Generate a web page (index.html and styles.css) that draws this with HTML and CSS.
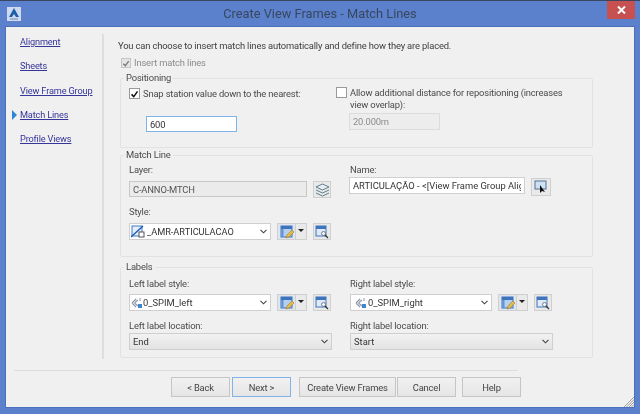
FILE: index.html
```html
<!DOCTYPE html>
<html>
  <head>
    <meta charset="utf-8">
    <title>Create View Frames - Match Lines</title>
    <link rel="stylesheet" href="styles.css">
  </head>
  <body>
    <svg class="defs" width="0" height="0">
      <symbol id="edit" viewBox="0 0 14 14">
        <rect x="1" y="1" width="11" height="11" fill="#b5cfee" stroke="#3d74bd"/>
        <rect x="1" y="1" width="11" height="3" fill="#3d74bd"/>
        <rect x="1.500" y="4" width="2" height="8" fill="#5f93d3"/>
        <path d="M6 13l1-3 5-5 2 2-5 5z" fill="#e6bb48" stroke="#9a7a2a" stroke-width=".6"/>
      </symbol>
      <symbol id="pick" viewBox="0 0 14 14">
        <rect x="1" y="1" width="10" height="10" fill="#dfe9f7" stroke="#3d74bd"/>
        <rect x="1" y="1" width="10" height="3" fill="#3d74bd"/>
        <circle cx="8.500" cy="8.500" r="2" fill="#f4f8fd" stroke="#5a6a7a" stroke-width=".8"/>
        <path d="M10 10l3 3" stroke="#333" stroke-width="1.200"/>
      </symbol>
      <symbol id="chev" viewBox="0 0 7 5">
        <path d="M.5 .8l3 3 3-3" fill="none" stroke="#444" stroke-width="1.100"/>
      </symbol>
      <symbol id="tick" viewBox="0 0 12 12">
        <path d="M2 6.500l3 3L10 2.500" fill="none" stroke="currentColor" stroke-width="2"/>
      </symbol>
      <symbol id="label-icon" viewBox="0 0 12 12">
        <path d="M1 6l4-4M1 6l4 4M3.500 6l3.500-3M3.500 6l3.500 3" fill="none" stroke="#8b97a6" stroke-width="1.100"/>
        <rect x="7" y="7" width="4" height="4" fill="#3f86cf"/>
        <path d="M9 1v3" stroke="#8b97a6"/>
      </symbol>
    </svg>

    <div class="window">
      <div class="titlebar">
        <svg class="app-icon" width="14" height="14" viewBox="0 0 14 14">
          <rect width="14" height="14" fill="#cfdaf0"/>
          <path d="M7 1L2 10h3l2-3 2 3h3z" fill="#1f5fa8"/>
          <rect x="3" y="11" width="8" height="2" fill="#9fb2d6"/>
        </svg>
        <div class="title">Create View Frames - Match Lines</div>
        <div class="close">
          <svg width="9" height="8" viewBox="0 0 9 8"><path d="M1 .5l7 7M8 .5l-7 7" stroke="#fff" stroke-width="2"/></svg>
        </div>
      </div>

      <div class="client">
        <div class="top">
          <nav class="sidebar">
            <a>Alignment</a>
            <a>Sheets</a>
            <a>View Frame Group</a>
            <a class="current">Match Lines</a>
            <a>Profile Views</a>
          </nav>

          <div class="main">
            <p class="intro">You can choose to insert match lines automatically and define how they are placed.</p>
            <div class="check-row insert">
              <span class="check disabled"><svg width="9" height="9"><use href="#tick"/></svg></span>
              <span class="muted">Insert match lines</span>
            </div>

            <fieldset class="group positioning">
              <legend>Positioning</legend>
              <div class="cols">
                <div>
                  <div class="check-row snap">
                    <span class="check big"><svg width="10" height="10"><use href="#tick"/></svg></span>
                    <span>Snap station value down to the nearest:</span>
                  </div>
                  <input class="field focused" type="text" value="600">
                </div>
                <div class="right-pos">
                  <div class="check-row allow">
                    <span class="check big"></span>
                    <span>Allow additional distance for repositioning (increases view overlap):</span>
                  </div>
                  <input class="field off" type="text" value="20.000m" disabled>
                </div>
              </div>
            </fieldset>

            <fieldset class="group matchline">
              <legend>Match Line</legend>
              <div class="cols">
                <div>
                  <label>Layer:</label>
                  <div class="ctl-row">
                    <input class="field layer" type="text" value="C-ANNO-MTCH" disabled>
                    <button class="icon-btn">
                      <svg width="15" height="14" viewBox="0 0 15 14">
                        <path d="M7.500 1L14 4l-6.500 3L1 4z" fill="#e9eef4" stroke="#5c7f8c"/>
                        <path d="M1 7l6.500 3L14 7M1 10l6.500 3L14 10" fill="none" stroke="#5c7f8c"/>
                      </svg>
                    </button>
                  </div>
                  <label class="second">Style:</label>
                  <div class="ctl-row">
                    <div class="select style">
                      <svg width="14" height="13" viewBox="0 0 14 13">
                        <rect x="1" y="1" width="10" height="10" fill="#e6eefa" stroke="#3f78c4"/>
                        <path d="M0 12L12 1" stroke="#1d5fb5" stroke-width="1.400"/>
                        <rect x="8" y="7" width="5" height="5" fill="#fff" stroke="#555"/>
                      </svg>
                      <span class="amr">_AMR-ARTICULACAO</span>
                      <svg class="arrow" width="7" height="5"><use href="#chev"/></svg>
                    </div>
                    <div class="split">
                      <span class="split-main"><svg width="14" height="14"><use href="#edit"/></svg></span>
                      <span class="split-drop"></span>
                    </div>
                    <button class="icon-btn"><svg width="14" height="14"><use href="#pick"/></svg></button>
                  </div>
                </div>
                <div>
                  <label>Name:</label>
                  <div class="ctl-row name-row">
                    <input class="field name" type="text" value="ARTICULAÇÃO - <[View Frame Group Alignment Name]">
                    <button class="icon-btn wide">
                      <svg width="14" height="14" viewBox="0 0 14 14">
                        <rect x="1" y="1" width="11" height="8" fill="#cfe0f4" stroke="#54708f"/>
                        <path d="M6 5l0 8 2-2 3 1z" fill="#111"/>
                      </svg>
                    </button>
                  </div>
                </div>
              </div>
            </fieldset>

            <fieldset class="group labels">
              <legend>Labels</legend>
              <div class="cols">
                <div>
                  <label>Left label style:</label>
                  <div class="ctl-row">
                    <div class="select style">
                      <svg width="12" height="12"><use href="#label-icon"/></svg>
                      <span>0_SPIM_left</span>
                      <svg class="arrow" width="7" height="5"><use href="#chev"/></svg>
                    </div>
                    <div class="split">
                      <span class="split-main"><svg width="14" height="14"><use href="#edit"/></svg></span>
                      <span class="split-drop"></span>
                    </div>
                    <button class="icon-btn"><svg width="14" height="14"><use href="#pick"/></svg></button>
                  </div>
                  <label class="third">Left label location:</label>
                  <div class="select plain">
                    <span>End</span>
                    <svg class="arrow" width="7" height="5"><use href="#chev"/></svg>
                  </div>
                </div>
                <div>
                  <label>Right label style:</label>
                  <div class="ctl-row">
                    <div class="select style right">
                      <svg width="12" height="12"><use href="#label-icon"/></svg>
                      <span>0_SPIM_right</span>
                      <svg class="arrow" width="7" height="5"><use href="#chev"/></svg>
                    </div>
                    <div class="split">
                      <span class="split-main"><svg width="14" height="14"><use href="#edit"/></svg></span>
                      <span class="split-drop"></span>
                    </div>
                    <button class="icon-btn"><svg width="14" height="14"><use href="#pick"/></svg></button>
                  </div>
                  <label class="third">Right label location:</label>
                  <div class="select plain">
                    <span>Start</span>
                    <svg class="arrow" width="7" height="5"><use href="#chev"/></svg>
                  </div>
                </div>
              </div>
            </fieldset>
          </div>
        </div>

        <div class="footer">
          <button class="btn">&lt; Back</button>
          <button class="btn default">Next &gt;</button>
          <button class="btn create">Create View Frames</button>
          <button class="btn cancel">Cancel</button>
          <button class="btn help">Help</button>
        </div>
        <svg class="grip" width="10" height="10" viewBox="0 0 10 10">
          <path d="M10 0L0 10M10 2.500L2.500 10M10 5L5 10M10 7.500L7.500 10" stroke="#a0a0a0"/>
        </svg>
      </div>
    </div>
  </body>
</html>
```

FILE: styles.css
```css
* {
  box-sizing: border-box;
}

html,
body {
  margin: 0;
  width: 640px;
  height: 414px;
  overflow: hidden;
}

body {
  background: #5b80cc;
  color: #4a4a4a;
  font-family: Roboto, "Liberation Sans", Arial, sans-serif;
  font-size: 9.400px;
  letter-spacing: -0.16px;
}

.defs {
  position: absolute;
}

.window {
  display: flex;
  flex-direction: column;
  height: 414px;
  border-top: 1px solid #3a4660;
  filter: blur(0.3px);
}

.titlebar {
  display: flex;
  align-items: flex-start;
  height: 26px;
  flex: none;
  padding-left: 7px;
}

.app-icon {
  margin-top: 6px;
  flex: none;
}

.title {
  flex: 1;
  text-align: center;
  font-size: 12.800px;
  letter-spacing: 0;
  line-height: 26px;
  color: #39465e;
  margin-left: 12px;
}

.close {
  display: flex;
  align-items: center;
  justify-content: center;
  width: 28px;
  height: 18px;
  margin-right: 5px;
  background: #c75050;
}

.client {
  position: relative;
  flex: 1;
  margin: 0 6px 7px;
  background: #f0f0f0;
  box-shadow: 0 0 0 1px #4a70bf;
}

.top {
  display: flex;
}

.sidebar {
  width: 98px;
  flex: none;
  display: flex;
  flex-direction: column;
  gap: 10.300px;
  margin-top: 7px;
  padding: 1px 0 0 14px;
  height: 325px;
  border-right: 2px solid #dedede;
}

.sidebar a {
  position: relative;
  color: #35359a;
  text-decoration: underline;
  font-size: 9.200px;
  line-height: 14px;
  white-space: nowrap;
}

.sidebar a.current::before {
  content: "";
  position: absolute;
  left: -8px;
  top: 2px;
  border-left: 5px solid #2f86d6;
  border-top: 5px solid transparent;
  border-bottom: 5px solid transparent;
}

.main {
  flex: 1;
  padding-left: 14px;
}

.intro {
  margin: 12px 0 0;
  line-height: 14px;
  white-space: nowrap;
  color: #404040;
}

.check-row {
  display: flex;
  align-items: flex-start;
  gap: 3px;
  line-height: 14px;
}

.insert {
  margin: 3px 0 0 3px;
  align-items: center;
}

.muted {
  color: #8c8c8c;
}

.check {
  display: flex;
  align-items: center;
  justify-content: center;
  width: 10px;
  height: 10px;
  flex: none;
  background: #fff;
  border: 1px solid #9a9a9a;
  color: #111;
}

.check.disabled {
  background: #e4e4e4;
  border-color: #c4c4c4;
  color: #777;
}

.check.big {
  width: 11px;
  height: 11px;
  margin-top: 1px;
}

.group {
  width: 473px;
  margin: 0 0 0 2px;
  padding: 0 0 0 8px;
  border: 1px solid #e2e2e2;
  border-radius: 2px;
  min-width: 0;
}

.group legend {
  margin-left: -5px;
  padding: 0 2px;
  line-height: 14px;
  color: #4a4a4a;
}

.positioning {
  height: 77px;
  margin-top: 1px;
}

.matchline {
  height: 109px;
}

.labels {
  height: 98px;
  margin-top: 3px;
}

.cols {
  display: grid;
  grid-template-columns: 221px 1fr;
}

label {
  display: block;
  line-height: 14px;
  padding-top: 1px;
}

.labels label {
  padding-top: 3px;
}

.labels label.third {
  padding-top: 0;
  margin-top: 8px;
}

.ctl-row {
  display: flex;
  align-items: flex-start;
  gap: 6px;
  margin-top: 4px;
}

.labels .ctl-row {
  margin-top: 3px;
}

.field {
  display: block;
  height: 16px;
  padding: 0 3px;
  font: inherit;
  letter-spacing: inherit;
  color: #333;
  background: #fff;
  border: 1px solid #d0d0d0;
  outline: none;
}

.field.focused {
  width: 91px;
  margin: 15px 0 0 17px;
  border-color: #7eb4ea;
}

.field.off {
  width: 91px;
  height: 17px;
  margin: 0 0 0 -1px;
  background: #ededed;
  border-color: #dcdcdc;
  color: #8c8c8c;
}

.snap {
  margin-top: 2px;
}

.allow {
  width: 240px;
  margin-left: -14px;
  padding-top: 2px;
  line-height: 11.500px;
}

.allow .check {
  margin-top: 0;
}

.right-pos .field {
  margin-top: 3px;
}

.field.layer {
  width: 178px;
  background: #ebebeb;
  color: #555;
  border-color: #c8c8c8;
}

.field.name {
  width: 176px;
  height: 17px;
  margin-top: -4px;
  letter-spacing: 0;
}

.name-row {
  margin-left: -1px;
}

.name-row .icon-btn {
  margin-top: -3px;
}

.icon-btn {
  display: flex;
  align-items: center;
  justify-content: center;
  width: 18px;
  height: 17px;
  padding: 0;
  background: #e9e9e9;
  border: 1px solid #cfcfcf;
}

.icon-btn.wide {
  width: 20px;
  height: 18px;
}

label.second {
  margin-top: 6px;
}

.select {
  display: flex;
  align-items: center;
  height: 17px;
  padding: 0 3px;
  color: #333;
  letter-spacing: 0;
  white-space: nowrap;
  border: 1px solid #cfcfcf;
}

.select .arrow {
  margin-left: auto;
  margin-right: 0;
}

.select.style {
  width: 142px;
  padding-left: 1px;
  background: #fff;
}

.select.style.right {
  padding-left: 4px;
}

.select.style.right span {
  margin-left: 1px;
}

.amr {
  margin-left: 2px;
  font-size: 9.200px;
}

.select.plain {
  width: 203px;
  background: linear-gradient(#f2f2f2, #e3e3e3);
}

.split {
  display: flex;
  height: 17px;
  width: 30px;
  flex: none;
  border: 1px solid #cfcfcf;
  background: #e9e9e9;
}

.split-main {
  display: flex;
  align-items: center;
  justify-content: center;
  flex: 1;
  border-right: 1px solid #cfcfcf;
  background: #dfe6ef;
}

.split-drop {
  position: relative;
  width: 10px;
}

.split-drop::after {
  content: "";
  position: absolute;
  left: 2px;
  top: 5px;
  border-top: 3px solid #222;
  border-left: 3px solid transparent;
  border-right: 3px solid transparent;
}

.footer {
  display: flex;
  gap: 2px;
  margin: 11px 0 0 8px;
  padding: 6px 0 0 157px;
  width: 504px;
  border-top: 1px solid #dcdcdc;
}

.btn {
  width: 59px;
  height: 20px;
  flex: none;
  padding: 0;
  font: inherit;
  letter-spacing: inherit;
  color: #444;
  background: linear-gradient(#f1f1f1, #e5e5e5);
  border: 1px solid #c6c6c6;
  white-space: nowrap;
}

.btn.default {
  border-color: #7eb4ea;
  margin-right: 6px;
}

.btn.create {
  width: 97px;
  margin-right: -1px;
}

.btn.help {
  margin-left: 4px;
}

.grip {
  position: absolute;
  right: 0;
  bottom: 0;
}
```
